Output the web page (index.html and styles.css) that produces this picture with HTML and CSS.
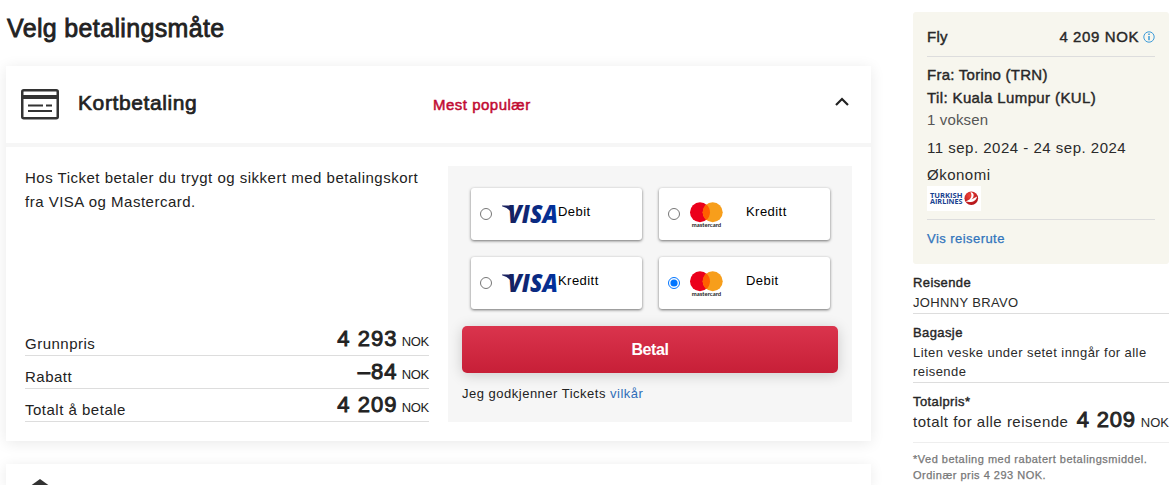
FILE: index.html
```html
<!DOCTYPE html>
<html lang="no">
<head>
<meta charset="utf-8">
<title>Velg betalingsmåte</title>
<link rel="stylesheet" href="styles.css">
</head>
<body>
<svg width="0" height="0" class="sprite" aria-hidden="true">
  <defs>
    <linearGradient id="visaBlue" x1="0" x2="1"><stop offset="0" stop-color="#17205c"/><stop offset="1" stop-color="#0032a0"/></linearGradient>
    <radialGradient id="thyRed" cx=".4" cy=".3" r=".8"><stop offset="0" stop-color="#f0463c"/><stop offset="1" stop-color="#a80a12"/></radialGradient>
    <symbol id="visa" viewBox="0 0 57 20">
      <path d="M0 .6H8Q10 .6 10.500 2.500L12 11L8.500 6.500Q5.500 2.500 0 1.300Z" fill="#1a2260"/>
      <text x="5.800" y="18.300" textLength="50" lengthAdjust="spacingAndGlyphs" class="visa-text">VISA</text>
    </symbol>
    <symbol id="mastercard" viewBox="0 0 33 27">
      <circle cx="10" cy="10.200" r="10" fill="#eb001b"/>
      <circle cx="22.700" cy="10.200" r="10" fill="#f79e1b"/>
      <path d="M16.350 2.480A10 10 0 0 1 16.350 17.920A10 10 0 0 1 16.350 2.480Z" fill="#ff5f00"/>
      <text x="1.700" y="25" textLength="29.500" lengthAdjust="spacingAndGlyphs" class="mc-text">mastercard</text>
    </symbol>
  </defs>
</svg>
<div class="page">
  <main class="main">
    <h1 class="title">Velg betalingsmåte</h1>
    <section class="card">
      <header class="card-head">
        <svg class="card-icon" width="38" height="31" viewBox="0 0 38 31" fill="none" stroke="#333">
          <rect x="1.250" y="1.250" width="35.500" height="28" rx="1.500" stroke-width="2.500"/>
          <path d="M1 8H37" stroke-width="4"/>
          <path d="M7 16.500H22M25 16.500H31M7 22H31" stroke-width="2"/>
        </svg>
        <h2 class="card-title">Kortbetaling</h2>
        <span class="popular">Mest populær</span>
        <svg class="chevron" width="14" height="10" viewBox="0 0 14 10" fill="none" stroke="#222" stroke-width="2.200"><path d="M1 8L7 2L13 8"/></svg>
      </header>
      <div class="card-body">
        <div class="info">
          <p class="desc">Hos Ticket betaler du trygt og sikkert med betalingskort<br>fra VISA og Mastercard.</p>
          <div class="prices">
            <div class="price-row"><span class="price-label">Grunnpris</span><span class="price"><b class="amount">4 293</b><span class="cur">NOK</span></span></div>
            <div class="price-row"><span class="price-label">Rabatt</span><span class="price"><b class="amount">–84</b><span class="cur">NOK</span></span></div>
            <div class="price-row"><span class="price-label">Totalt å betale</span><span class="price"><b class="amount">4 209</b><span class="cur">NOK</span></span></div>
          </div>
        </div>
        <div class="pay">
          <div class="options">
            <label class="option"><input class="radio" type="radio" name="card"><svg class="visa" width="57" height="20"><use href="#visa"/></svg><span class="option-name">Debit</span></label>
            <label class="option"><input class="radio" type="radio" name="card"><svg class="mc" width="33" height="27"><use href="#mastercard"/></svg><span class="option-name">Kreditt</span></label>
            <label class="option"><input class="radio" type="radio" name="card"><svg class="visa" width="57" height="20"><use href="#visa"/></svg><span class="option-name">Kreditt</span></label>
            <label class="option"><input class="radio" type="radio" name="card" checked><svg class="mc" width="33" height="27"><use href="#mastercard"/></svg><span class="option-name">Debit</span></label>
          </div>
          <button class="pay-button">Betal</button>
          <p class="terms">Jeg godkjenner Tickets <a class="link">vilkår</a></p>
        </div>
      </div>
    </section>
    <section class="card card-next">
      <svg width="36" height="6" viewBox="0 0 36 6"><path d="M18 0L26.300 6H9.700Z" fill="#333"/></svg>
    </section>
  </main>
  <aside class="side">
    <div class="trip">
      <div class="trip-head"><span class="fly">Fly</span><span class="trip-price">4 209 NOK</span>
        <svg class="info-icon" width="12" height="12" viewBox="0 0 12 12" fill="none" stroke="#3d9bd8"><circle cx="6" cy="6" r="5.200"/><path d="M6 5V9.200M6 2.600V4" stroke-width="1.500"/></svg>
      </div>
      <div class="route"><span class="from">Fra: Torino (TRN)</span><span class="to">Til: Kuala Lumpur (KUL)</span></div>
      <div class="pax">1 voksen</div>
      <div class="dates">11 sep. 2024 - 24 sep. 2024</div>
      <div class="cabin">Økonomi</div>
      <svg class="airline" width="54" height="25" viewBox="0 0 54 25">
        <rect width="54" height="25" fill="#fff"/>
        <text x="3" y="11.500" textLength="32.500" lengthAdjust="spacingAndGlyphs" class="thy-text">TURKISH</text>
        <text x="3" y="18" textLength="32.500" lengthAdjust="spacingAndGlyphs" class="thy-text">AIRLINES</text>
        <circle cx="44.300" cy="12.300" r="6.800" fill="url(#thyRed)"/>
        <path d="M43.500 6C48 7 47 11 44.500 13.500L50 10.500C49.500 15 45 17 38.500 15.500C43 14 46 11 43.500 6Z" fill="#fff"/>
      </svg>
      <a class="itinerary">Vis reiserute</a>
    </div>
    <div class="block travelers"><h3 class="block-title">Reisende</h3><p class="block-text names">JOHNNY BRAVO</p></div>
    <div class="block baggage"><h3 class="block-title">Bagasje</h3><p class="block-text">Liten veske under setet inngår for alle reisende</p></div>
    <div class="block total"><h3 class="block-title">Totalpris*</h3>
      <div class="total-row"><span class="total-label">totalt for alle reisende</span><span class="price"><b class="amount">4 209</b><span class="cur">NOK</span></span></div>
    </div>
    <p class="note">*Ved betaling med rabatert betalingsmiddel.<br>Ordinær pris 4 293 NOK.</p>
  </aside>
</div>
</body>
</html>
```
FILE: styles.css
```css
* { box-sizing: border-box; }
body { margin: 0; height: 485px; overflow: hidden; background: #fff; color: #222; font-family: "Liberation Sans", Arial, sans-serif; font-size: 15px; letter-spacing: .5px; }
h1, h2, h3, p { margin: 0; font-weight: 400; }
svg { display: block; flex: none; }
.sprite { position: absolute; }
.page { display: grid; grid-template-columns: 865px 256px; column-gap: 42px; height: 485px; padding: 12px 0 0 6px; }
.title { height: 54px; padding-left: 1px; font-size: 25px; line-height: 32px; letter-spacing: .35px; -webkit-text-stroke: .8px #222; }
.card { background: #fff; box-shadow: 0 2px 14px rgba(0,0,0,.09); }
.card-head { display: flex; align-items: flex-start; height: 81px; padding: 23px 22px 0 15px; border-bottom: 4px solid #f6f6f6; }
.card-title { width: 355px; margin-left: 19px; font-size: 21px; line-height: 28px; letter-spacing: .6px; -webkit-text-stroke: .7px #222; }
.popular { font-size: 15px; line-height: 32px; letter-spacing: .5px; color: #c10a32; -webkit-text-stroke: .5px #c10a32; }
.chevron { margin: 8px 0 0 auto; }
.card-body { display: flex; justify-content: space-between; height: 294px; padding: 19px; }
.info { display: flex; flex-direction: column; justify-content: space-between; width: 404px; }
.desc { line-height: 24px; white-space: nowrap; }
.price-row { display: flex; justify-content: space-between; align-items: flex-end; height: 33px; border-bottom: 1px solid #ddd; }
.price-label { line-height: 20px; padding-bottom: 1px; }
.price { display: flex; align-items: baseline; line-height: 24px; padding-bottom: 1px; }
.amount { font-size: 22px; font-weight: 400; letter-spacing: 1.1px; -webkit-text-stroke: .9px #222; }
.cur { margin-left: 4px; font-size: 13px; letter-spacing: -.3px; }
.pay { width: 404px; height: 256px; padding: 22px 14px 0; background: #f6f6f6; }
.options { display: grid; grid-template-columns: 171px 171px; gap: 17px; padding-left: 9px; }
.option { display: flex; align-items: flex-start; height: 52px; padding-left: 9px; background: #fff; border-radius: 3px; box-shadow: 0 1px 3px rgba(0,0,0,.55); font-size: 13px; letter-spacing: .45px; color: #000; }
.radio { width: 12px; height: 12px; margin: 20px 10px 0 0; }
.visa { margin-top: 17px; }
.mc { margin: 14px 23px 0 0; }
.option-name { line-height: 18px; margin-top: 15px; }
.visa + .option-name { margin-left: -1px; }
.visa-text { font: italic 800 24px "Open Sans", sans-serif; letter-spacing: 0; fill: url(#visaBlue); }
.mc-text { font: 700 6px Lato, sans-serif; letter-spacing: 0; fill: #222; }
.thy-text { font: 700 7px "Open Sans", sans-serif; letter-spacing: 0; fill: #17418f; }
.pay-button { display: block; width: 376px; height: 47px; margin-top: 17px; padding: 0; border: 0; border-radius: 5px; background: linear-gradient(#da344d, #c71f37); box-shadow: 0 2px 14px rgba(0,0,0,.18); color: #fff; font: 700 16px "Liberation Sans", sans-serif; letter-spacing: -.4px; }
.terms { margin-top: 11px; font-size: 13px; line-height: 20px; }
.link { color: #2f6db8; }
.card-next { height: 21px; margin-top: 23px; padding: 15px 0 0 16px; }
.side { color: #2a2a2a; }
.trip { height: 252px; padding: 0 14px; background: #f7f6ee; border-radius: 3px; }
.trip-head { display: flex; align-items: center; height: 45px; padding-top: 5px; border-bottom: 1px solid #ddd; -webkit-text-stroke: .4px #222; }
.trip-price { margin-left: auto; letter-spacing: .6px; }
.info-icon { margin-left: 4px; -webkit-text-stroke: 0; }
.fly { letter-spacing: .3px; }
.route { display: flex; flex-direction: column; height: 53px; padding-top: 6px; line-height: 23px; -webkit-text-stroke: .4px #222; }
.from { letter-spacing: .25px; }
.to { letter-spacing: .38px; }
.pax { line-height: 20px; letter-spacing: .15px; color: #555; }
.dates { margin-top: 7px; line-height: 22px; letter-spacing: .5px; }
.cabin { margin-top: 4px; line-height: 24px; }
.airline { margin-top: -1px; }
.itinerary { display: block; margin-top: 8px; border-top: 1px solid #ddd; padding-top: 8px; font-size: 13px; line-height: 22px; letter-spacing: .45px; color: #3174bc; -webkit-text-stroke: .25px #3174bc; }
.block { border-bottom: 1px solid #ddd; font-size: 13px; }
.block-title { font-size: 13px; line-height: 20px; letter-spacing: .4px; -webkit-text-stroke: .4px #222; }
.block-text { line-height: 19px; letter-spacing: .43px; }
.names { letter-spacing: .35px; }
.travelers { height: 50px; padding-top: 9px; }
.baggage { height: 69px; padding-top: 9px; }
.total { height: 60px; padding-top: 9px; border-color: #eee; }
.total-row { display: flex; justify-content: space-between; align-items: baseline; margin-top: -4px; }
.total-label { font-size: 15px; letter-spacing: .5px; }
.total-row .amount { letter-spacing: .8px; }
.total-row .cur { letter-spacing: 0; margin-left: 5px; }
.note { margin-top: 8px; font-size: 11px; line-height: 16px; letter-spacing: .5px; color: #777; -webkit-text-stroke: .25px #777; white-space: nowrap; }
```
